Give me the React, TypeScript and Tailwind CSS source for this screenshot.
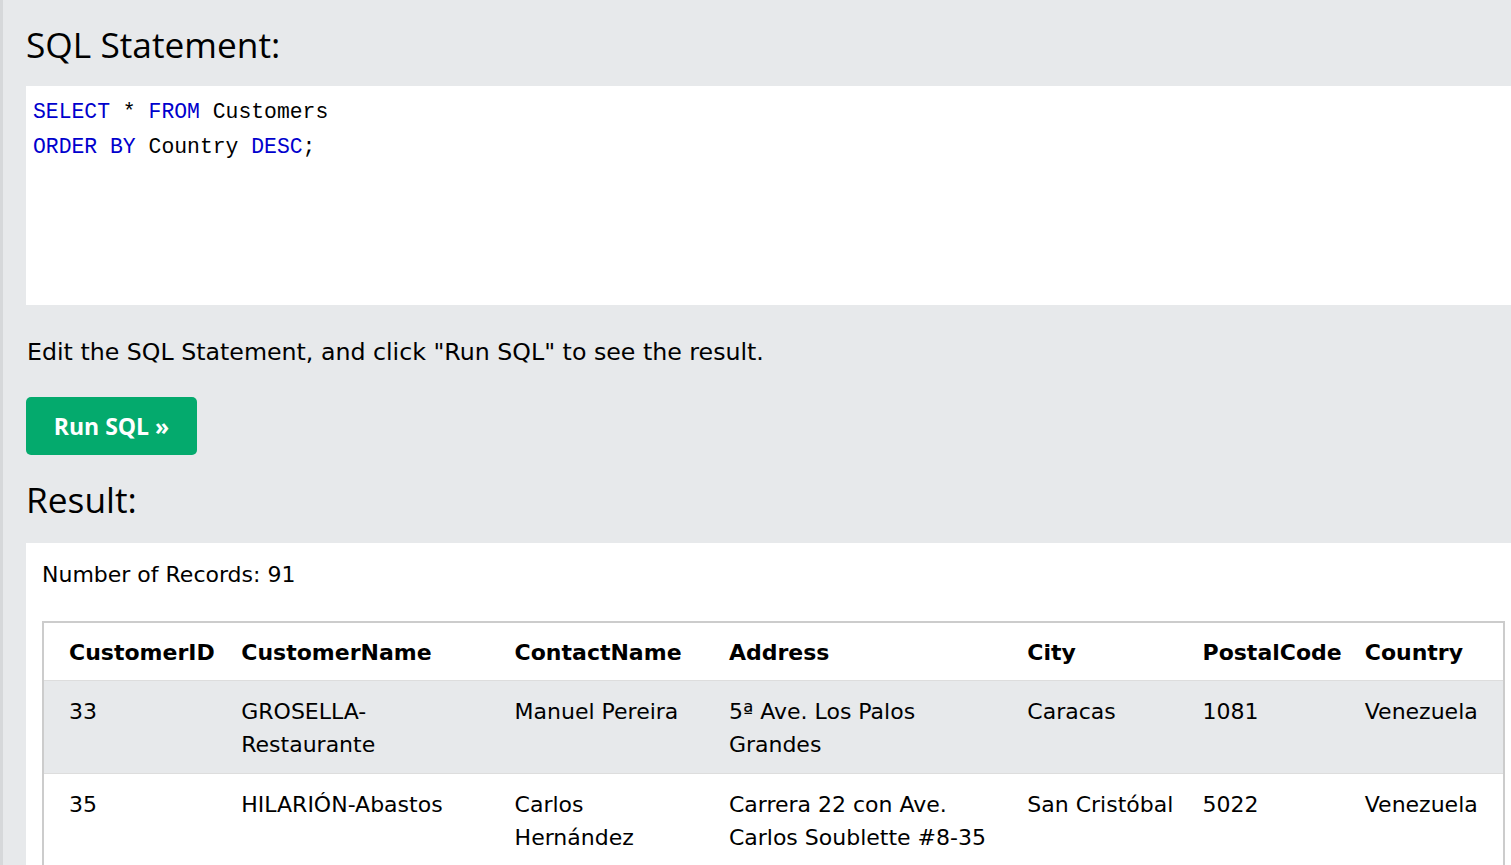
import React from 'react';

const body = { fontFamily: '"DejaVu Sans", Verdana, sans-serif' };
const heading = { fontFamily: '"Open Sans", "Segoe UI", sans-serif' };
const mono = { fontFamily: '"Liberation Mono", Consolas, monospace' };

const cols = [
    { name: 'CustomerID', w: 'w-[186px] pl-[25px]' },
    { name: 'CustomerName', w: 'w-[273px] pl-[12px]' },
    { name: 'ContactName', w: 'w-[214px] pl-[12px]' },
    { name: 'Address', w: 'w-[298px] pl-[12px]' },
    { name: 'City', w: 'w-[175px] pl-[12px]' },
    { name: 'PostalCode', w: 'w-[162px] pl-[12px]' },
    { name: 'Country', w: 'w-[151px] pl-[12px]' },
];

const rows = [
    ['33', 'GROSELLA-Restaurante', 'Manuel Pereira', '5ª Ave. Los Palos Grandes', 'Caracas', '1081', 'Venezuela'],
    ['35', 'HILARIÓN-Abastos', 'Carlos Hernández', 'Carrera 22 con Ave. Carlos Soublette #8-35', 'San Cristóbal', '5022', 'Venezuela'],
];

export default function App() {
    return (
        <div className="min-h-[865px] w-[1511px] overflow-hidden bg-[#e7e9eb] border-l-[3px] border-[#d6d8da] text-black">
            <div className="pl-[23px]">
                <h2 className="pt-[20px] text-[35.3px] leading-[48px] font-normal" style={heading}>SQL Statement:</h2>
                <div className="mt-[18px] h-[219px] bg-white pl-[7px] pt-[9px] text-[21.4px] leading-[35px]" style={mono}>
                    <div>
                        <span className="text-[#0000cd]">SELECT</span> * <span className="text-[#0000cd]">FROM</span> Customers
                    </div>
                    <div>
                        <span className="text-[#0000cd]">ORDER BY</span> Country <span className="text-[#0000cd]">DESC</span>;
                    </div>
                </div>
                <p className="mt-[33px] text-[23.7px] leading-[28px] pl-[1px]" style={body}>
                    Edit the SQL Statement, and click "Run SQL" to see the result.
                </p>
                <button
                    className="mt-[31px] w-[171px] h-[58px] rounded-[5px] bg-[#04aa6d] text-white text-[23px] font-bold flex items-center justify-center"
                    style={{ fontFamily: '"Open Sans", "Source Sans Pro", sans-serif' }}
                >
                    Run SQL »
                </button>
                <h2 className="mt-[20px] text-[35.3px] leading-[48px] font-normal" style={heading}>Result:</h2>
                <div className="mt-[20px] bg-white pl-[16px] pt-[17px]" style={body}>
                    <div className="text-[22px] leading-[30px]">Number of Records: 91</div>
                    <table className="mt-[31px] table-fixed border-collapse border-2 border-[#cccccc] w-[1463px] text-[22px] leading-[33px]">
                        <thead>
                            <tr className="border-b border-[#dddddd]">
                                {cols.map((c) => (
                                    <th key={c.name} className={`${c.w} text-left font-bold pt-[13px] pb-[11px] align-top`}>{c.name}</th>
                                ))}
                            </tr>
                        </thead>
                        <tbody>
                            {rows.map((r, i) => (
                                <tr key={i} className={`border-b border-[#dddddd] ${i % 2 === 0 ? 'bg-[#e7e9eb]' : 'bg-white'}`}>
                                    {r.map((cell, j) => (
                                        <td key={j} className={`${cols[j].w} pt-[14px] pb-[12px] pr-[12px] align-top`}>{cell}</td>
                                    ))}
                                </tr>
                            ))}
                        </tbody>
                    </table>
                </div>
            </div>
        </div>
    );
}
